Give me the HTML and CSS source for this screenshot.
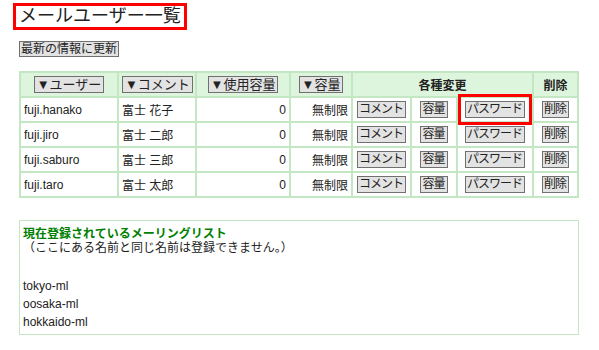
FILE: index.html
```html
<!DOCTYPE html>
<html lang="ja">
<head>
    <meta charset="UTF-8">
    <title>メールユーザー一覧</title>
    <link rel="stylesheet" href="styles.css">
</head>
<body>
    <div class="head">
        <h1 class="title">メールユーザー一覧</h1>
    </div>
    <div class="refresh">
        <button class="btn">最新の情報に更新</button>
    </div>

    <table class="users">
        <colgroup>
            <col class="c-user">
            <col class="c-comment">
            <col class="c-used">
            <col class="c-quota">
            <col class="c-b1">
            <col class="c-b2">
            <col class="c-b3">
            <col class="c-del">
        </colgroup>
        <tr>
            <th><button class="btn sort">▼ユーザー</button></th>
            <th><button class="btn sort">▼コメント</button></th>
            <th><button class="btn sort">▼使用容量</button></th>
            <th><button class="btn sort">▼容量</button></th>
            <th colspan="3">各種変更</th>
            <th>削除</th>
        </tr>
        <tr>
            <td>fuji.hanako</td>
            <td>富士 花子</td>
            <td class="num">0</td>
            <td class="num">無制限</td>
            <td class="act"><button class="btn">コメント</button></td>
            <td class="act"><button class="btn">容量</button></td>
            <td class="act"><button class="btn marked">パスワード</button></td>
            <td class="act"><button class="btn">削除</button></td>
        </tr>
        <tr>
            <td>fuji.jiro</td>
            <td>富士 二郎</td>
            <td class="num">0</td>
            <td class="num">無制限</td>
            <td class="act"><button class="btn">コメント</button></td>
            <td class="act"><button class="btn">容量</button></td>
            <td class="act"><button class="btn">パスワード</button></td>
            <td class="act"><button class="btn">削除</button></td>
        </tr>
        <tr>
            <td>fuji.saburo</td>
            <td>富士 三郎</td>
            <td class="num">0</td>
            <td class="num">無制限</td>
            <td class="act"><button class="btn">コメント</button></td>
            <td class="act"><button class="btn">容量</button></td>
            <td class="act"><button class="btn">パスワード</button></td>
            <td class="act"><button class="btn">削除</button></td>
        </tr>
        <tr>
            <td>fuji.taro</td>
            <td>富士 太郎</td>
            <td class="num">0</td>
            <td class="num">無制限</td>
            <td class="act"><button class="btn">コメント</button></td>
            <td class="act"><button class="btn">容量</button></td>
            <td class="act"><button class="btn">パスワード</button></td>
            <td class="act"><button class="btn">削除</button></td>
        </tr>
    </table>

    <div class="ml-box">
        <div class="ml-title">現在登録されているメーリングリスト</div>
        <div class="ml-note">（ここにある名前と同じ名前は登録できません。）</div>
        <ul class="ml-list">
            <li>tokyo-ml</li>
            <li>oosaka-ml</li>
            <li>hokkaido-ml</li>
        </ul>
    </div>
</body>
</html>
```

FILE: styles.css
```css
body {
    margin: 0;
    padding: 3px 13px 0 13px;
    font-family: "Liberation Sans", "Noto Sans CJK JP", sans-serif;
    font-size: 12px;
    color: #222;
    background: #fff;
}
.title {
    display: inline-block;
    margin: 0;
    padding: 0 3px;
    border: 3px solid #f00;
    font-size: 18px;
    font-weight: normal;
    line-height: 21px;
    color: #222;
}
.refresh {
    margin: 11px 0 0 6px;
    height: 16px;
}
.btn {
    font-family: "Liberation Sans", "Noto Sans CJK JP", sans-serif;
    font-size: 12px;
    line-height: 13px;
    height: 17px;
    padding: 0 1px;
    margin: 0;
    color: #222;
    background: #e3e3e3;
    border: 1px solid #707070;
    border-radius: 0;
    vertical-align: middle;
}
.refresh .btn {
    height: 16px;
}
.users {
    margin: 14px 0 0 6px;
    width: 560px;
    table-layout: fixed;
    border-collapse: collapse;
    border: 2px solid #c3e6c3;
}
.c-user { width: 98px; }
.c-comment { width: 78px; }
.c-used { width: 94px; }
.c-quota { width: 62px; }
.c-b1 { width: 59px; }
.c-b2 { width: 46px; }
.c-b3 { width: 76px; }
.c-del { width: 45px; }
.users th,
.users td {
    border: 2px solid #c3e6c3;
    height: 23px;
    padding: 0 3px;
    white-space: nowrap;
}
.users th {
    background: #ddf4dd;
    text-align: center;
    font-weight: bold;
    font-size: 12px;
}
.sort {
    font-size: 13px;
    padding: 0 2px;
}
.num {
    text-align: right;
    padding-right: 5px;
}
.act {
    text-align: center;
}
.act .btn {
    letter-spacing: -1px;
    padding: 0 2px 0 1px;
}
.marked {
    outline: 3px solid #f00;
    outline-offset: 4px;
}
.ml-box {
    margin: 22px 0 0 6px;
    width: 555px;
    border: 1px solid #c3e6c3;
    padding: 6px 0 3px 3px;
}
.ml-title {
    color: #008000;
    font-weight: bold;
    line-height: 14px;
}
.ml-note {
    line-height: 14px;
}
.ml-list {
    list-style: none;
    margin: 22px 0 0 0;
    padding: 0;
}
.ml-list li {
    line-height: 18px;
}
```
